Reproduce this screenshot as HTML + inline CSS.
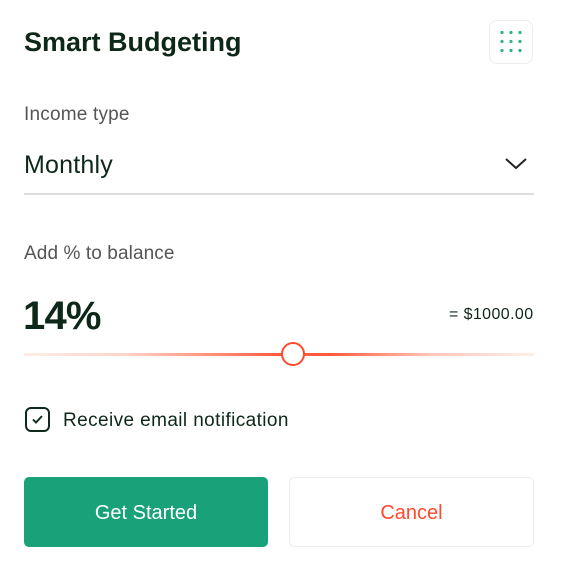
<!DOCTYPE html>
<html><head><style>
body{margin:0;width:563px;height:568px;background:#fff;font-family:"Liberation Sans",sans-serif;position:relative;overflow:hidden;color:#0f2a1c}
.a{position:absolute;white-space:nowrap}
</style></head><body>
<div class="a" style="left:24px;top:27px;font-size:27px;font-weight:bold;letter-spacing:0px;color:#0d2818">Smart Budgeting</div>
<div class="a" style="left:489px;top:20px;width:44px;height:44px;border:1.5px solid #ececec;border-radius:8px;box-sizing:border-box">
<svg width="44" height="44" style="position:absolute;left:-1.5px;top:-1.5px"><g fill="#2fb286">
<circle cx="13" cy="12.5" r="1.6"/><circle cx="22" cy="12.5" r="1.6"/><circle cx="31" cy="12.5" r="1.6"/>
<circle cx="13" cy="21.5" r="1.6"/><circle cx="22" cy="21.5" r="1.6"/><circle cx="31" cy="21.5" r="1.6"/>
<circle cx="13" cy="30.5" r="1.6"/><circle cx="22" cy="30.5" r="1.6"/><circle cx="31" cy="30.5" r="1.6"/></g></svg></div>
<div class="a" style="left:24px;top:104px;font-size:19px;letter-spacing:0.2px;color:#555">Income type</div>
<div class="a" style="left:24px;top:151px;font-size:25px;letter-spacing:0.2px;color:#0d2818">Monthly</div>
<svg class="a" style="left:504px;top:156px" width="24" height="16"><path d="M2 3 L12 12 L22 3" fill="none" stroke="#222" stroke-width="2"/></svg>
<div class="a" style="left:24px;top:193px;width:510px;height:1.5px;background:#ddd"></div>
<div class="a" style="left:24px;top:243px;font-size:19px;letter-spacing:0.1px;color:#555">Add % to balance</div>
<div class="a" style="left:23px;top:294px;font-size:40px;font-weight:bold;letter-spacing:-0.8px;color:#0d2818">14%</div>
<div class="a" style="left:449px;top:306px;font-size:16px;letter-spacing:0.4px;color:#0d2818">= $1000.00</div>
<div class="a" style="left:24px;top:353px;width:510px;height:2.5px;background:linear-gradient(90deg,#ffeee9 0%,#ffd3c8 20%,#ff5a3c 50%,#ff5a3c 60%,#ffc7ba 80%,#ffeee9 100%)"></div>
<div class="a" style="left:281px;top:342px;width:20px;height:20px;border:2.7px solid #ff4a2e;border-radius:50%;background:#fff"></div>
<div class="a" style="left:25px;top:407px;width:25px;height:25px;border:2px solid #0f2a1c;border-radius:6px;box-sizing:border-box">
<svg width="21" height="21"><path d="M6 10.5 L9 13.5 L15 7" fill="none" stroke="#0f2a1c" stroke-width="1.9"/></svg></div>
<div class="a" style="left:63px;top:410px;font-size:19px;letter-spacing:0.4px;color:#0d2818">Receive email notification</div>
<div class="a" style="left:24px;top:477px;width:244px;height:70px;background:#19a27a;border-radius:5px;color:#fff;font-size:20px;text-align:center;line-height:72px">Get Started</div>
<div class="a" style="left:289px;top:477px;width:245px;height:70px;border:1.5px solid #ececec;box-sizing:border-box;border-radius:5px;color:#ff4a2e;font-size:20px;text-align:center;line-height:70px">Cancel</div>
</body></html>
